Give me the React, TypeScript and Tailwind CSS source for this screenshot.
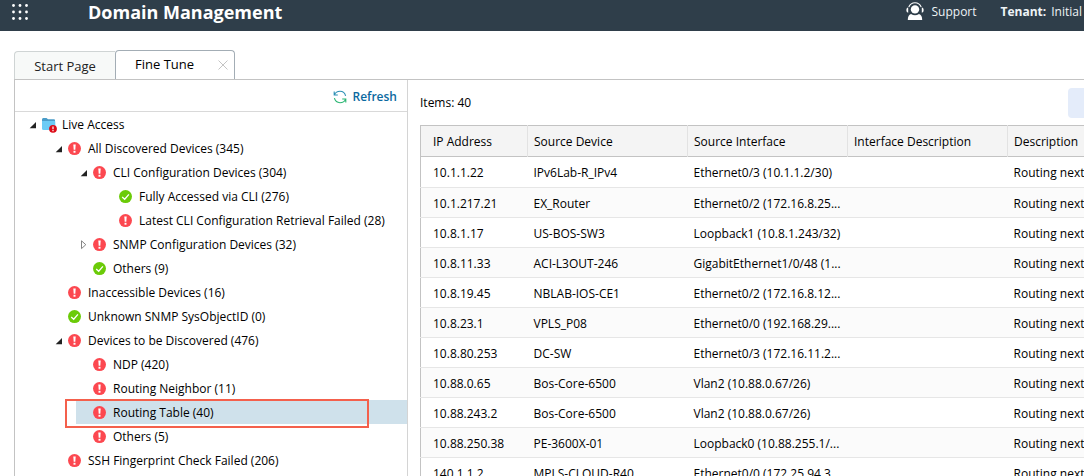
import { clsx } from "clsx";

type Status = "folder" | "error" | "ok";

interface TreeNode {
  label: string;
  level: 0 | 1 | 2 | 3;
  status: Status;
  arrow?: "open" | "closed";
  selected?: boolean;
}

const nodes: TreeNode[] = [
  { label: "Live Access", level: 0, status: "folder", arrow: "open" },
  { label: "All Discovered Devices (345)", level: 1, status: "error", arrow: "open" },
  { label: "CLI Configuration Devices (304)", level: 2, status: "error", arrow: "open" },
  { label: "Fully Accessed via CLI (276)", level: 3, status: "ok" },
  { label: "Latest CLI Configuration Retrieval Failed (28)", level: 3, status: "error" },
  { label: "SNMP Configuration Devices (32)", level: 2, status: "error", arrow: "closed" },
  { label: "Others (9)", level: 2, status: "ok" },
  { label: "Inaccessible Devices (16)", level: 1, status: "error" },
  { label: "Unknown SNMP SysObjectID (0)", level: 1, status: "ok" },
  { label: "Devices to be Discovered (476)", level: 1, status: "error", arrow: "open" },
  { label: "NDP (420)", level: 2, status: "error" },
  { label: "Routing Neighbor (11)", level: 2, status: "error" },
  { label: "Routing Table (40)", level: 2, status: "error", selected: true },
  { label: "Others (5)", level: 2, status: "error" },
  { label: "SSH Fingerprint Check Failed (206)", level: 1, status: "error" },
];

const indent = ["ml-[10px]", "ml-[36px]", "ml-[61px]", "ml-[87px]"];

const rows = [
  ["10.1.1.22", "IPv6Lab-R_IPv4", "Ethernet0/3 (10.1.1.2/30)"],
  ["10.1.217.21", "EX_Router", "Ethernet0/2 (172.16.8.25..."],
  ["10.8.1.17", "US-BOS-SW3", "Loopback1 (10.8.1.243/32)"],
  ["10.8.11.33", "ACI-L3OUT-246", "GigabitEthernet1/0/48 (1..."],
  ["10.8.19.45", "NBLAB-IOS-CE1", "Ethernet0/2 (172.16.8.12..."],
  ["10.8.23.1", "VPLS_P08", "Ethernet0/0 (192.168.29...."],
  ["10.8.80.253", "DC-SW", "Ethernet0/3 (172.16.11.2..."],
  ["10.88.0.65", "Bos-Core-6500", "Vlan2 (10.88.0.67/26)"],
  ["10.88.243.2", "Bos-Core-6500", "Vlan2 (10.88.0.67/26)"],
  ["10.88.250.38", "PE-3600X-01", "Loopback0 (10.88.255.1/..."],
  ["140.1.1.2", "MPLS-CLOUD-R40", "Ethernet0/0 (172.25.94.3..."],
];

const columns = ["IP Address", "Source Device", "Source Interface", "Interface Description", "Description"];

function StatusIcon({ status }: { status: Status }) {
  if (status === "folder") {
    return (
      <svg width="15" height="16" viewBox="0 0 15 16" className="-mr-px shrink-0" aria-hidden="true">
        <path d="M0 2.5Q0 1 1.2 1H4.5L6 2.2H12Q13 2.2 13 3.2V6H0Z" fill="#4a9cc8" />
        <path d="M0 4H12.5Q13.3 4 13.3 5V11.5Q13.3 13 12 13H1.5Q0 13 0 11.5Z" fill="#6ccbf5" />
        <circle cx="11" cy="11.8" r="3.9" fill="#dc0b17" />
        <path d="M11 9.4V12.2M11 13.1V14.2" stroke="#fff" strokeWidth="1.2" />
      </svg>
    );
  }
  if (status === "ok") {
    return (
      <svg width="14" height="14" viewBox="0 0 14 14" className="shrink-0" aria-hidden="true">
        <circle cx="6.5" cy="6.6" r="6.5" fill="#6bcb08" />
        <path d="M3.2 6.9L5.7 9.2L9.9 4.4" fill="none" stroke="#fff" strokeWidth="1.3" />
      </svg>
    );
  }
  return (
    <svg width="14" height="14" viewBox="0 0 14 14" className="shrink-0" aria-hidden="true">
      <circle cx="6.5" cy="6.6" r="6.5" fill="#fc4850" />
      <path d="M5.3 2.6H7.7L7.3 7.8H5.7Z" fill="#fff" />
      <rect x="5.5" y="8.8" width="2" height="1.9" fill="#fff" />
    </svg>
  );
}

function Arrow({ state }: { state?: "open" | "closed" }) {
  return (
    <svg width="8" height="10" viewBox="0 0 8 10" className="shrink-0" aria-hidden="true">
      {state === "open" && <path d="M7 2V8.3H0.7Z" fill="#222" />}
      {state === "closed" && <path d="M1.5 0.8V8.6L5.8 4.7Z" fill="#fff" stroke="#777" strokeWidth="0.9" />}
    </svg>
  );
}

function TopBar() {
  return (
    <header className="flex h-[31px] shrink-0 items-start bg-[#2f3e4a] text-[#eef3f6]">
      <button type="button" aria-label="Applications" className="ml-3 mt-1">
        <svg width="17" height="17" viewBox="0 0 17 17" fill="#fff">
          {[1.5, 8, 14.5].map((y) =>
            [1.5, 8, 14.5].map((x) => <circle key={`${x}-${y}`} cx={x} cy={y} r="1.4" />)
          )}
        </svg>
      </button>
      <h1 className="ml-[59px] text-lg leading-6 font-bold text-white">Domain Management</h1>
      <div className="ml-auto flex h-6 items-center pr-0.5 text-xs">
        <a href="#support" className="flex items-center gap-2">
          <svg width="18" height="20" viewBox="0 0 18 20" aria-hidden="true">
            <circle cx="9" cy="7.4" r="4.2" fill="#fff" />
            <path d="M2.8 5Q4.6 0.8 9 0.8T15.2 5" fill="none" stroke="#fff" strokeWidth="1.1" />
            <path d="M2.2 5.2Q0.3 5.6 0.3 8T2.2 10.8ZM15.8 5.2Q17.7 5.6 17.7 8T15.8 10.8Z" fill="#fff" />
            <path d="M1.8 18Q1.8 13 5 12Q9 14.6 13 12Q16.2 13 16.2 18Z" fill="#fff" />
          </svg>
          Support
        </a>
        <span className="ml-6 font-bold">Tenant:</span>
        <span className="ml-[5px]">Initial</span>
      </div>
    </header>
  );
}

function Tabs() {
  return (
    <div role="tablist" className="flex shrink-0 items-end pl-3.5 pt-[19px]">
      <button
        type="button"
        role="tab"
        aria-selected="false"
        className="h-7 w-[101px] rounded-tl-sm border-t border-l border-[#cfd4d4] bg-[#f7f9f8] pt-0.5 text-[13px] text-[#222]"
      >
        Start Page
      </button>
      <div className="flex h-[29px] w-[120px] items-center justify-between rounded-t-sm border-x border-t border-[#a3adb5] bg-white pr-1.5 pl-[19px]">
        <button type="button" role="tab" aria-selected="true" className="text-[13px] text-black">
          Fine Tune
        </button>
        <button type="button" aria-label="Close tab">
          <svg width="10" height="10" viewBox="0 0 10 10" stroke="#c4c4c4" strokeWidth="1">
            <path d="M0.5 0.5L9.5 9.5M9.5 0.5L0.5 9.5" />
          </svg>
        </button>
      </div>
    </div>
  );
}

function DeviceTree() {
  return (
    <aside className="w-[393px] shrink-0 border-r border-[#d4d4d4]">
      <div className="flex h-8 items-center justify-end border-b border-[#d9d9d9] pt-0.5 pr-2.5">
        <button type="button" className="flex items-center gap-1.5 text-xs font-semibold text-[#0b69a0]">
          <svg width="14" height="14" viewBox="0 0 14 14" fill="none" strokeWidth="1.1" aria-hidden="true">
            <path d="M1.2 1.5V5H4.8M1.4 4.8Q3 1.3 7 1.3Q11.4 1.3 12.6 5.8" stroke="#2b8fb5" />
            <path d="M12.8 12.5V9H9.2M12.6 9.2Q11 12.7 7 12.7Q2.6 12.7 1.4 8.2" stroke="#2bb673" />
          </svg>
          Refresh
        </button>
      </div>
      <ul role="tree" aria-label="Live Access" className="text-xs text-black">
        {nodes.map((node, i) => (
          <li
            key={i}
            role="treeitem"
            aria-level={node.level + 1}
            aria-selected={!!node.selected}
            aria-expanded={node.arrow ? node.arrow === "open" : undefined}
            className="relative flex h-6"
          >
            <div
              className={clsx(
                "flex flex-1 items-center pt-0.5 whitespace-nowrap",
                indent[node.level],
                node.selected && "bg-[#cfe1eb]"
              )}
            >
              <span className="flex w-[17px] shrink-0 pl-1">
                <Arrow state={node.arrow} />
              </span>
              <StatusIcon status={node.status} />
              <span className="ml-1.5">{node.label}</span>
            </div>
            {node.selected && (
              <div className="pointer-events-none absolute -top-px right-[38px] left-[50px] h-[29px] border-2 border-[#f4604c]" />
            )}
          </li>
        ))}
      </ul>
    </aside>
  );
}

function ItemTable() {
  return (
    <section className="flex min-w-0 flex-1 flex-col pl-3">
      <div className="flex h-[45px] shrink-0 items-center justify-between text-xs">
        <span>Items: 40</span>
        <button type="button" aria-label="Actions" className="h-[30px] w-4 rounded-l-sm bg-[#e4ecfa]" />
      </div>
      <table className="w-full table-fixed border-collapse border-t border-l border-[#c3c3c3] text-left text-xs text-black">
        <colgroup>
          <col className="w-[107px]" />
          <col className="w-40" />
          <col className="w-40" />
          <col className="w-40" />
          <col />
        </colgroup>
        <thead>
          <tr className="h-[31px] border-b border-[#c3c3c3] bg-[#f4f4f4]">
            {columns.map((column) => (
              <th
                key={column}
                scope="col"
                className="overflow-hidden border-r border-r-[#e2e2e2] pt-px pl-1.5 font-normal whitespace-nowrap first:pl-3 last:border-r-0"
              >
                {column}
              </th>
            ))}
          </tr>
        </thead>
        <tbody>
          {rows.map(([ip, device, port]) => (
            <tr key={ip} className="h-[30px] border-b border-[#e6e6e6] first:h-[31px] even:bg-[#fbfbfb]">
              <td className="pt-0.5 pl-3">{ip}</td>
              <td className="pt-0.5 pl-1.5">{device}</td>
              <td className="pt-0.5 pl-1.5 whitespace-nowrap">{port}</td>
              <td />
              <td className="overflow-hidden pt-0.5 pl-1.5 whitespace-nowrap">Routing next</td>
            </tr>
          ))}
        </tbody>
      </table>
    </section>
  );
}

export default function App() {
  return (
    <div className="flex h-screen flex-col overflow-hidden bg-white font-['Open_Sans',sans-serif] text-black">
      <TopBar />
      <Tabs />
      <main className="ml-3.5 flex min-h-0 flex-1 border-t border-l border-[#c3c3c3]">
        <DeviceTree />
        <ItemTable />
      </main>
    </div>
  );
}
